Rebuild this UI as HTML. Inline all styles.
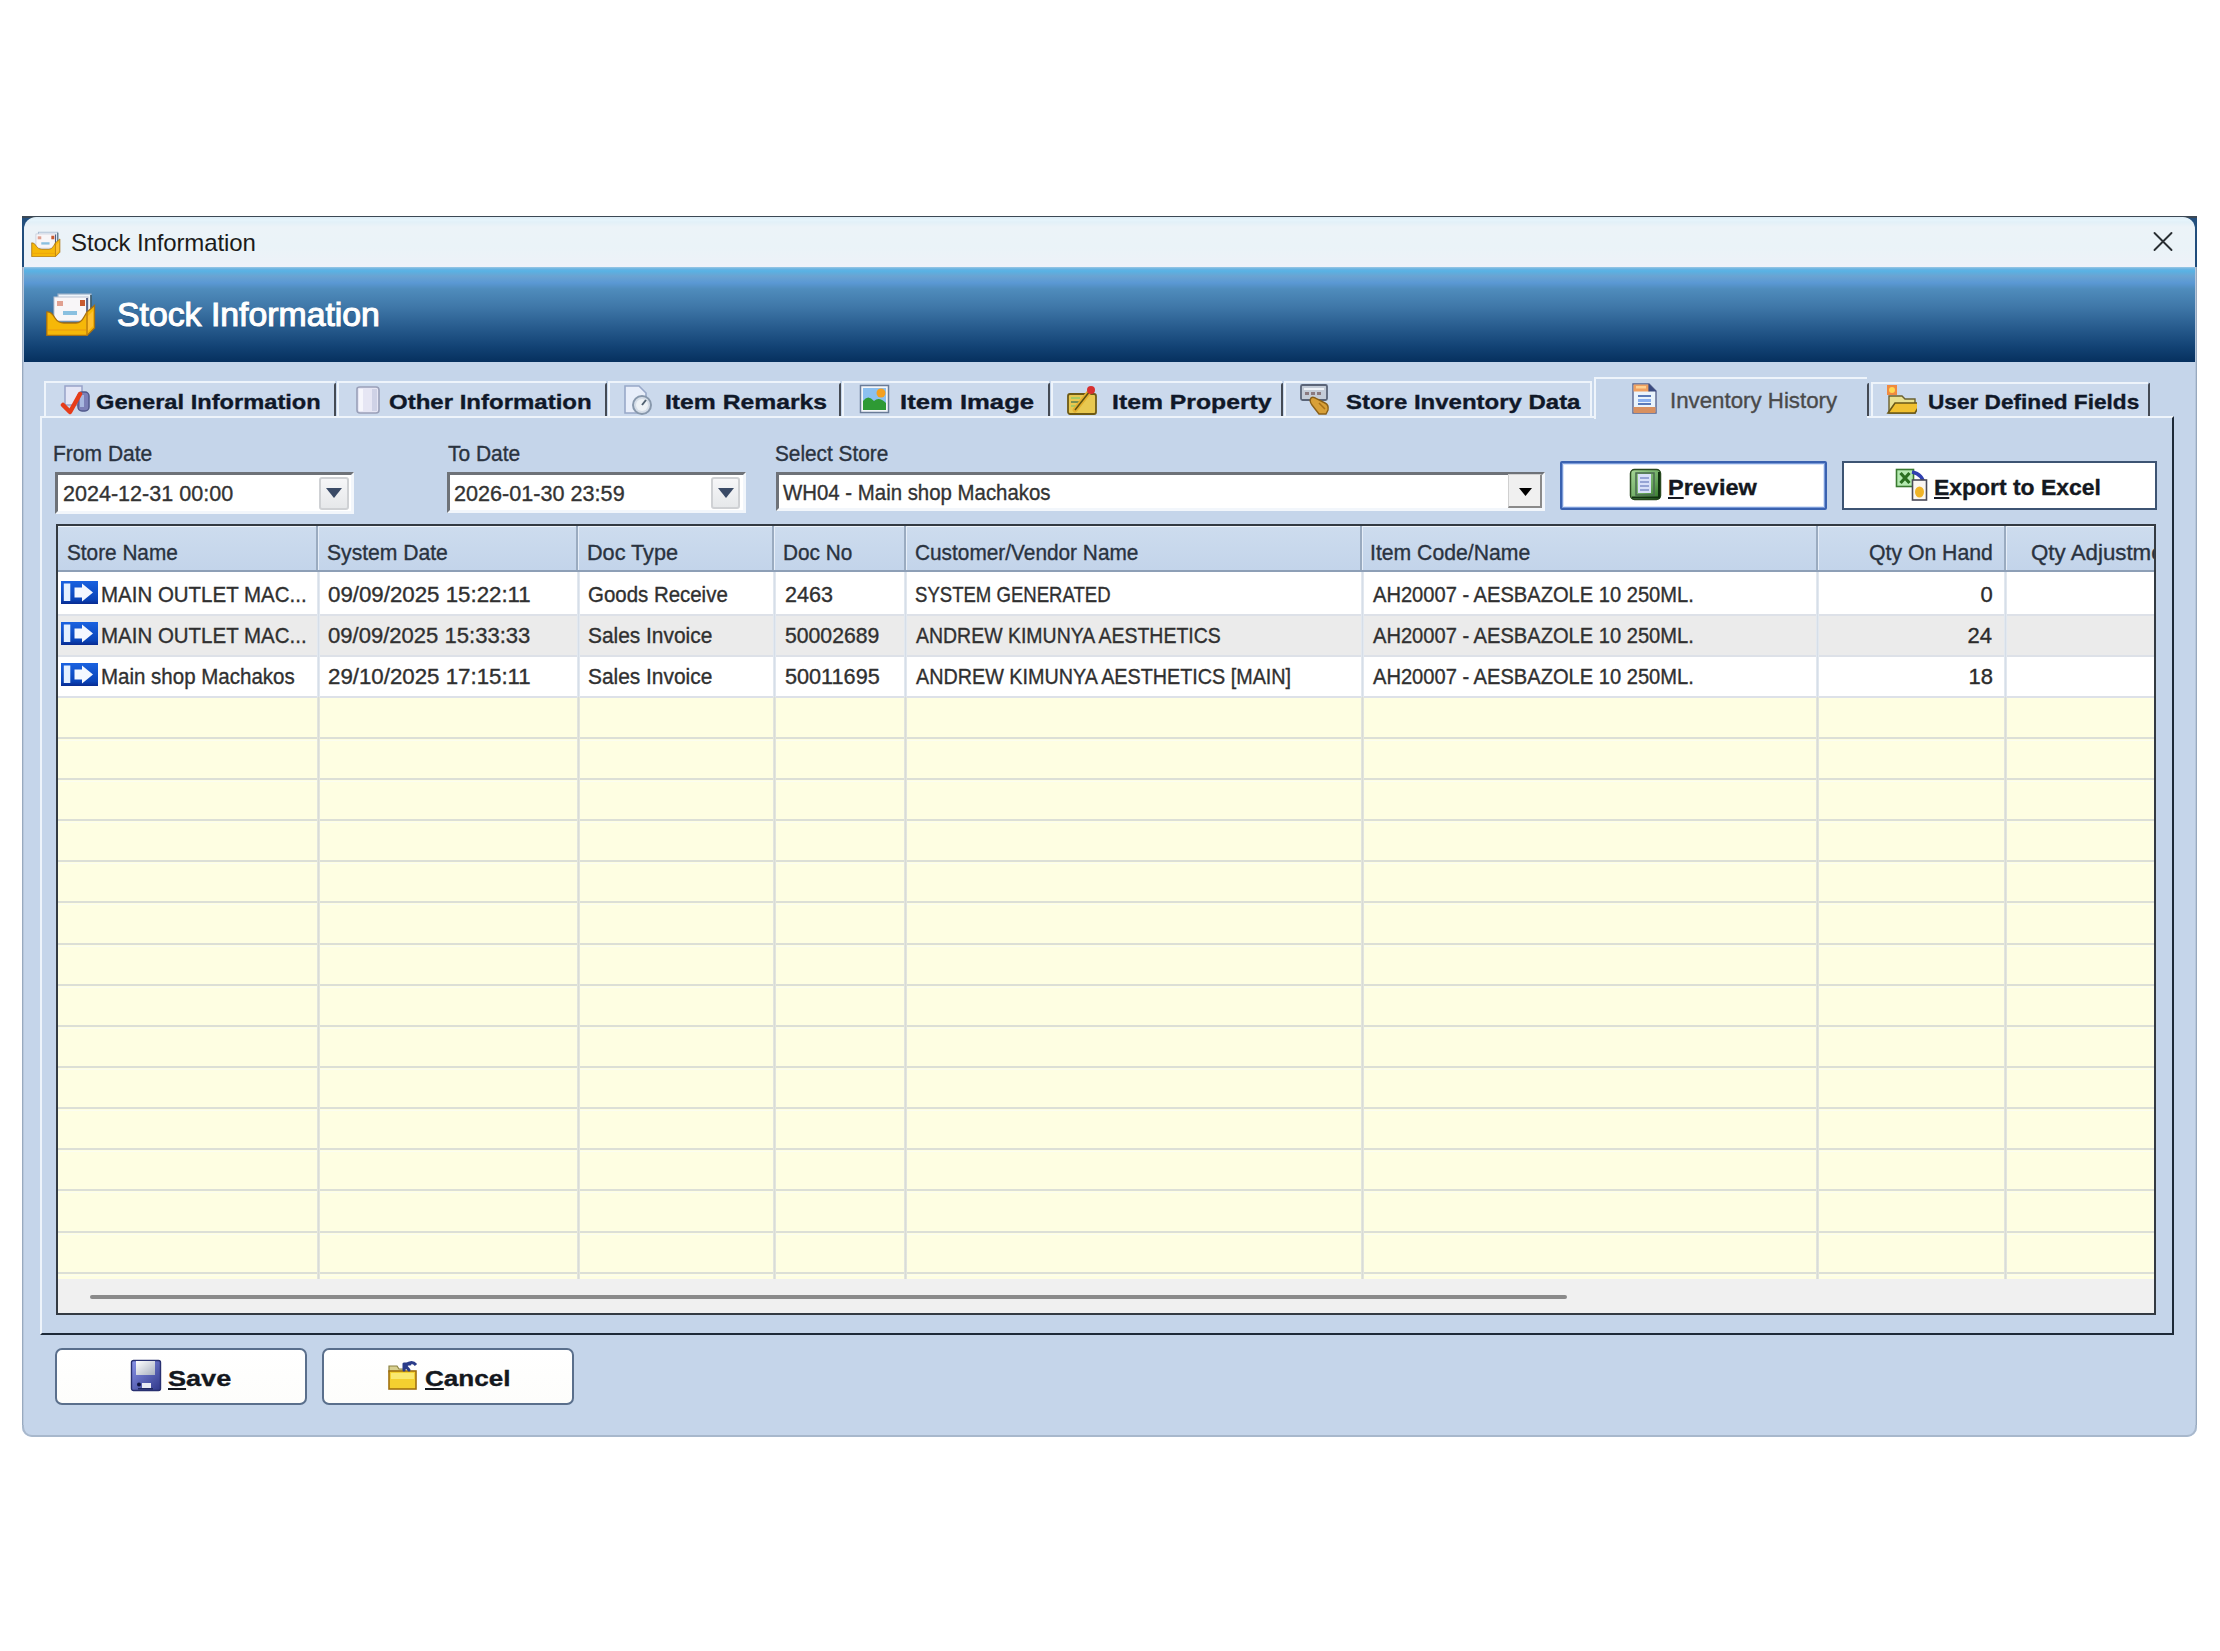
<!DOCTYPE html><html><head><meta charset="utf-8"><style>
*{margin:0;padding:0;box-sizing:border-box}
html,body{width:2220px;height:1651px;overflow:hidden;background:#fff;font-family:"Liberation Sans",sans-serif}
.a{position:absolute}
.t{position:absolute;white-space:nowrap;font-family:"Liberation Sans",sans-serif;-webkit-text-stroke:0.35px currentColor}
</style></head><body><div class="a" style="left:22px;top:216px;width:2175px;height:1221px;background:#c5d5ea;border-radius:0 0 10px 10px;"></div>
<div class="a" style="left:22px;top:216px;width:2175px;height:51px;background:linear-gradient(#3c4854 0px,#3c4854 1.5px,#24507e 2px,#1d4a7a);"></div>
<div class="a" style="left:24px;top:217px;width:2171px;height:50px;background:linear-gradient(#dcecf6 0px,#e6f4fb 3px,#e2f0f8 5px,#ecf3f8 10px,#eaf3f8 30px,#edf2f8 45px,#f0f2fa 50px);border-radius:12px 12px 0 0;"></div>
<div class="a" style="left:23px;top:267px;width:2173px;height:95px;background:linear-gradient(#9cc8e4 0px,#6ab2e2 2px,#58b2e4 4px,#6aa4d2 9px,#5a98d4 16px,#4f8cbc 22px,#3f77a8 40px,#285c8e 60px,#124274 80px,#06305e 95px);"></div>
<div class="a" style="left:22px;top:267px;width:2px;height:1160px;background:linear-gradient(90deg,#8a9bb0,#c5d5ea);"></div>
<div class="a" style="left:2195px;top:267px;width:2px;height:1160px;background:linear-gradient(90deg,#c5d5ea,#8a9bb0);"></div>
<div class="a" style="left:22px;top:1425px;width:2175px;height:12px;border:2px solid #a8b8cc;border-top:none;border-radius:0 0 10px 10px;"></div>
<div class="t" style="left:71.00px;top:230.90px;font-size:24px;line-height:24px;letter-spacing:-0.125px;color:#1b1b1b;-webkit-text-stroke:0;">Stock Information</div>
<svg class="a" style="left:2150px;top:229px" width="26" height="24" viewBox="0 0 26 24"><path d="M4.5 4 L21.5 21 M21.5 4 L4.5 21" stroke="#2a2f33" stroke-width="1.9" stroke-linecap="round"/></svg>
<div class="t" style="left:116.95px;top:298.25px;font-size:33px;line-height:33px;color:#ffffff;transform:scaleX(1.0238);transform-origin:0 0;-webkit-text-stroke:1.1px #fff;text-shadow:0 1px 1px rgba(0,20,60,.4);">Stock Information</div>
<svg class="a" style="left:31px;top:231px" width="30" height="26" viewBox="0 0 50 44"><rect x="12" y="2" width="33" height="22" fill="#eef4fa" stroke="#9ab0c8" stroke-width="1.2"/><rect x="8" y="5" width="34" height="24" fill="#f8f6f8" stroke="#b8c0d0" stroke-width="1"/><rect x="11" y="9" width="6" height="5" fill="#e0a090"/><rect x="34" y="8" width="5" height="6" fill="#c85a30"/><rect x="17" y="19" width="14" height="4" fill="#8ac0e0"/><path d="M41 6 L41 26" stroke="#304070" stroke-width="1.5"/><path d="M45 3 L45 22" stroke="#305060" stroke-width="1.5"/><path d="M0.8 20 Q5 19 9 26 Q12 31 18 31 L30 31 Q35 31 38 25 L41 20 L48.5 13.5 L48.5 36 L41 43.5 L0.8 43.5 Z" fill="#f6b808" stroke="#a87010" stroke-width="1.3"/><path d="M41 20 L41 43.5" stroke="#c08010" stroke-width="1.5"/><path d="M2 38 L40 38" stroke="#e89a10" stroke-width="1"/><path d="M42 24 L47 19 L47 34 L42 39 Z" fill="#ffc030"/></svg>
<svg class="a" style="left:46px;top:292px" width="50" height="44" viewBox="0 0 50 44"><rect x="12" y="2" width="33" height="22" fill="#eef4fa" stroke="#9ab0c8" stroke-width="1.2"/><rect x="8" y="5" width="34" height="24" fill="#f8f6f8" stroke="#b8c0d0" stroke-width="1"/><rect x="11" y="9" width="6" height="5" fill="#e0a090"/><rect x="34" y="8" width="5" height="6" fill="#c85a30"/><rect x="17" y="19" width="14" height="4" fill="#8ac0e0"/><path d="M41 6 L41 26" stroke="#304070" stroke-width="1.5"/><path d="M45 3 L45 22" stroke="#305060" stroke-width="1.5"/><path d="M0.8 20 Q5 19 9 26 Q12 31 18 31 L30 31 Q35 31 38 25 L41 20 L48.5 13.5 L48.5 36 L41 43.5 L0.8 43.5 Z" fill="#f6b808" stroke="#a87010" stroke-width="1.3"/><path d="M41 20 L41 43.5" stroke="#c08010" stroke-width="1.5"/><path d="M2 38 L40 38" stroke="#e89a10" stroke-width="1"/><path d="M42 24 L47 19 L47 34 L42 39 Z" fill="#ffc030"/></svg>
<div class="a" style="left:44px;top:381px;width:291px;height:36px;background:#cbd9ec;border-top:2px solid #eef4fb;border-left:2px solid #eef4fb;"></div>
<div class="t" style="left:95.87px;top:391.35px;font-size:21px;line-height:21px;color:#101828;transform:scaleX(1.1263);transform-origin:0 0;font-weight:bold;">General Information</div>
<div class="a" style="left:337px;top:381px;width:269px;height:36px;background:#cbd9ec;border-top:2px solid #eef4fb;border-left:2px solid #eef4fb;"></div>
<div class="t" style="left:388.86px;top:391.35px;font-size:21px;line-height:21px;color:#101828;transform:scaleX(1.1429);transform-origin:0 0;font-weight:bold;">Other Information</div>
<div class="a" style="left:608px;top:381px;width:232px;height:36px;background:#cbd9ec;border-top:2px solid #eef4fb;border-left:2px solid #eef4fb;"></div>
<div class="t" style="left:664.82px;top:391.35px;font-size:21px;line-height:21px;color:#101828;transform:scaleX(1.1765);transform-origin:0 0;font-weight:bold;">Item Remarks</div>
<div class="a" style="left:842px;top:381px;width:207px;height:36px;background:#cbd9ec;border-top:2px solid #eef4fb;border-left:2px solid #eef4fb;"></div>
<div class="t" style="left:899.78px;top:391.35px;font-size:21px;line-height:21px;color:#101828;transform:scaleX(1.2222);transform-origin:0 0;font-weight:bold;">Item Image</div>
<div class="a" style="left:1051px;top:381px;width:231px;height:36px;background:#cbd9ec;border-top:2px solid #eef4fb;border-left:2px solid #eef4fb;"></div>
<div class="t" style="left:1111.82px;top:391.35px;font-size:21px;line-height:21px;color:#101828;transform:scaleX(1.1791);transform-origin:0 0;font-weight:bold;">Item Property</div>
<div class="a" style="left:1284px;top:381px;width:308px;height:36px;background:#cbd9ec;border-top:2px solid #eef4fb;border-left:2px solid #eef4fb;"></div>
<div class="t" style="left:1345.86px;top:391.35px;font-size:21px;line-height:21px;color:#101828;transform:scaleX(1.1415);transform-origin:0 0;font-weight:bold;">Store Inventory Data</div>
<div class="a" style="left:1590px;top:382px;width:2px;height:35px;background:#eef4fb;"></div>
<div class="a" style="left:334px;top:383px;width:2px;height:33px;background:#444a54;border-radius:2px 0 0 0;"></div>
<div class="a" style="left:605px;top:383px;width:2px;height:33px;background:#444a54;border-radius:2px 0 0 0;"></div>
<div class="a" style="left:839px;top:383px;width:2px;height:33px;background:#444a54;border-radius:2px 0 0 0;"></div>
<div class="a" style="left:1048px;top:383px;width:2px;height:33px;background:#444a54;border-radius:2px 0 0 0;"></div>
<div class="a" style="left:1281px;top:383px;width:2px;height:33px;background:#444a54;border-radius:2px 0 0 0;"></div>
<div class="a" style="left:1867px;top:383px;width:2px;height:33px;background:#444a54;border-radius:2px 0 0 0;"></div>
<div class="a" style="left:2148px;top:383px;width:2px;height:33px;background:#444a54;border-radius:2px 0 0 0;"></div>
<div class="a" style="left:1871px;top:382px;width:277px;height:35px;background:#cbd9ec;border-top:2px solid #eef4fb;border-left:2px solid #eef4fb;"></div>
<div class="t" style="left:1927.92px;top:391.35px;font-size:21px;line-height:21px;color:#101828;transform:scaleX(1.0773);transform-origin:0 0;font-weight:bold;">User Defined Fields</div>
<div class="a" style="left:40px;top:416px;width:2134px;height:919px;background:#c5d5ea;border-top:2px solid #eef4fb;border-left:2px solid #eef4fb;border-right:2px solid #1e2a38;border-bottom:2px solid #1e2a38;"></div>
<div class="a" style="left:1594px;top:377px;width:273px;height:42px;background:#c5d5ea;border-top:2px solid #eef4fb;border-left:2px solid #eef4fb;"></div>
<div class="t" style="left:1669.98px;top:390.10px;font-size:22px;line-height:22px;color:#4a4a4a;transform:scaleX(1.0123);transform-origin:0 0;">Inventory History</div>
<div class="t" style="left:52.59px;top:443.10px;font-size:22px;line-height:22px;color:#2a3340;transform:scaleX(0.9554);transform-origin:0 0;">From Date</div>
<div class="t" style="left:447.50px;top:443.10px;font-size:22px;line-height:22px;color:#2a3340;transform:scaleX(0.9533);transform-origin:0 0;">To Date</div>
<div class="t" style="left:774.56px;top:443.10px;font-size:22px;line-height:22px;color:#2a3340;transform:scaleX(0.9449);transform-origin:0 0;">Select Store</div>
<div class="a" style="left:55px;top:472px;width:299px;height:42px;background:#fff;border-top:3px solid #6e7278;border-left:3px solid #6e7278;border-bottom:3px solid #f2f6fb;border-right:3px solid #f2f6fb;"></div><div class="a" style="left:319px;top:477px;width:30px;height:33px;background:linear-gradient(#f6f6f8,#e6e8ea);border:2px solid #cfd1d4;border-radius:3px;"></div><svg class="a" style="left:326.0px;top:488.0px" width="16" height="10" viewBox="0 0 16 10"><path d="M0 0 L16 0 L8.0 10 Z" fill="#3a4a66"/></svg>
<div class="a" style="left:447px;top:472px;width:299px;height:41px;background:#fff;border-top:3px solid #6e7278;border-left:3px solid #6e7278;border-bottom:3px solid #f2f6fb;border-right:3px solid #f2f6fb;"></div><div class="a" style="left:711px;top:477px;width:29px;height:32px;background:linear-gradient(#f6f6f8,#e6e8ea);border:2px solid #cfd1d4;border-radius:3px;"></div><svg class="a" style="left:717.5px;top:487.5px" width="16" height="10" viewBox="0 0 16 10"><path d="M0 0 L16 0 L8.0 10 Z" fill="#3a4a66"/></svg>
<div class="a" style="left:776px;top:472px;width:769px;height:39px;background:#fff;border-top:3px solid #6e7278;border-left:3px solid #6e7278;border-bottom:3px solid #f2f6fb;border-right:3px solid #f2f6fb;"></div><div class="a" style="left:1508px;top:474px;width:34px;height:34px;background:#f0f0f0;border:1px solid #d0d0d0;border-bottom:2px solid #8a8a8a;border-right:2px solid #8a8a8a;"></div><svg class="a" style="left:1518.5px;top:487.5px" width="13" height="8" viewBox="0 0 13 8"><path d="M0 0 L13 0 L6.5 8 Z" fill="#000"/></svg>
<div class="t" style="left:63.02px;top:482.60px;font-size:22px;line-height:22px;color:#333;transform:scaleX(0.9795);transform-origin:0 0;">2024-12-31 00:00</div>
<div class="t" style="left:454.02px;top:482.60px;font-size:22px;line-height:22px;color:#333;transform:scaleX(0.9825);transform-origin:0 0;">2026-01-30 23:59</div>
<div class="t" style="left:783.00px;top:482.10px;font-size:22px;line-height:22px;color:#333;transform:scaleX(0.9271);transform-origin:0 0;">WH04 - Main shop Machakos</div>
<div class="a" style="left:1560px;top:461px;width:267px;height:49px;background:#fff;border:2px solid #3a62b0;border-radius:2px;box-shadow:inset 0 0 0 1px #7a9ad8,inset 0 0 0 2px #d8e4f8;"></div>
<div class="t" style="left:1667.93px;top:477.10px;font-size:22px;line-height:22px;transform:scaleX(1.0671);transform-origin:0 0;color:#141820;font-weight:bold"><span style="text-decoration:underline;text-underline-offset:2px;text-decoration-thickness:2px">P</span>review</div>
<div class="a" style="left:1842px;top:461px;width:315px;height:49px;background:#fff;border:2px solid #3d5473;"></div>
<div class="t" style="left:1934.46px;top:476.60px;font-size:22px;line-height:22px;transform:scaleX(1.0411);transform-origin:0 0;color:#141820;font-weight:bold"><span style="text-decoration:underline;text-underline-offset:2px;text-decoration-thickness:2px">E</span>xport to Excel</div>
<div class="a" style="left:56px;top:524px;width:2100px;height:791px;background:#fefee2;border:2px solid #333a42;"></div>
<div class="a" style="left:58px;top:526px;width:2096px;height:47px;background:linear-gradient(#cddcee,#c3d4ea);border-top:1px solid #eef4fb;border-bottom:3px solid #8d9fb6;"></div>
<div class="a" style="left:316px;top:526px;width:2px;height:44px;background:#9aabc0;box-shadow:1px 0 0 #e6eef8;"></div>
<div class="a" style="left:576px;top:526px;width:2px;height:44px;background:#9aabc0;box-shadow:1px 0 0 #e6eef8;"></div>
<div class="a" style="left:772px;top:526px;width:2px;height:44px;background:#9aabc0;box-shadow:1px 0 0 #e6eef8;"></div>
<div class="a" style="left:904px;top:526px;width:2px;height:44px;background:#9aabc0;box-shadow:1px 0 0 #e6eef8;"></div>
<div class="a" style="left:1360px;top:526px;width:2px;height:44px;background:#9aabc0;box-shadow:1px 0 0 #e6eef8;"></div>
<div class="a" style="left:1816px;top:526px;width:2px;height:44px;background:#9aabc0;box-shadow:1px 0 0 #e6eef8;"></div>
<div class="a" style="left:2004px;top:526px;width:2px;height:44px;background:#9aabc0;box-shadow:1px 0 0 #e6eef8;"></div>
<div class="a" style="left:58px;top:572px;width:2096px;height:42px;background:#ffffff;"></div>
<div class="a" style="left:58px;top:614px;width:2096px;height:42px;background:#ebebeb;"></div>
<div class="a" style="left:58px;top:655px;width:2096px;height:42px;background:#ffffff;"></div>
<div class="a" style="left:58px;top:614px;width:2096px;height:2px;background:#dde1e8;"></div>
<div class="a" style="left:58px;top:655px;width:2096px;height:2px;background:#dde1e8;"></div>
<div class="a" style="left:58px;top:696px;width:2096px;height:2px;background:#dde1e8;"></div>
<div class="a" style="left:58px;top:737px;width:2096px;height:2px;background:#dcdfd6;"></div>
<div class="a" style="left:58px;top:740px;width:2096px;height:1px;background:#fbfdf0;"></div>
<div class="a" style="left:58px;top:778px;width:2096px;height:2px;background:#dcdfd6;"></div>
<div class="a" style="left:58px;top:781px;width:2096px;height:1px;background:#fbfdf0;"></div>
<div class="a" style="left:58px;top:819px;width:2096px;height:2px;background:#dcdfd6;"></div>
<div class="a" style="left:58px;top:822px;width:2096px;height:1px;background:#fbfdf0;"></div>
<div class="a" style="left:58px;top:860px;width:2096px;height:2px;background:#dcdfd6;"></div>
<div class="a" style="left:58px;top:863px;width:2096px;height:1px;background:#fbfdf0;"></div>
<div class="a" style="left:58px;top:901px;width:2096px;height:2px;background:#dcdfd6;"></div>
<div class="a" style="left:58px;top:904px;width:2096px;height:1px;background:#fbfdf0;"></div>
<div class="a" style="left:58px;top:943px;width:2096px;height:2px;background:#dcdfd6;"></div>
<div class="a" style="left:58px;top:946px;width:2096px;height:1px;background:#fbfdf0;"></div>
<div class="a" style="left:58px;top:984px;width:2096px;height:2px;background:#dcdfd6;"></div>
<div class="a" style="left:58px;top:987px;width:2096px;height:1px;background:#fbfdf0;"></div>
<div class="a" style="left:58px;top:1025px;width:2096px;height:2px;background:#dcdfd6;"></div>
<div class="a" style="left:58px;top:1028px;width:2096px;height:1px;background:#fbfdf0;"></div>
<div class="a" style="left:58px;top:1066px;width:2096px;height:2px;background:#dcdfd6;"></div>
<div class="a" style="left:58px;top:1069px;width:2096px;height:1px;background:#fbfdf0;"></div>
<div class="a" style="left:58px;top:1107px;width:2096px;height:2px;background:#dcdfd6;"></div>
<div class="a" style="left:58px;top:1110px;width:2096px;height:1px;background:#fbfdf0;"></div>
<div class="a" style="left:58px;top:1148px;width:2096px;height:2px;background:#dcdfd6;"></div>
<div class="a" style="left:58px;top:1151px;width:2096px;height:1px;background:#fbfdf0;"></div>
<div class="a" style="left:58px;top:1189px;width:2096px;height:2px;background:#dcdfd6;"></div>
<div class="a" style="left:58px;top:1192px;width:2096px;height:1px;background:#fbfdf0;"></div>
<div class="a" style="left:58px;top:1231px;width:2096px;height:2px;background:#dcdfd6;"></div>
<div class="a" style="left:58px;top:1234px;width:2096px;height:1px;background:#fbfdf0;"></div>
<div class="a" style="left:58px;top:1272px;width:2096px;height:2px;background:#dcdfd6;"></div>
<div class="a" style="left:58px;top:1275px;width:2096px;height:1px;background:#fbfdf0;"></div>
<div class="a" style="left:317px;top:572px;width:3px;height:125px;background:linear-gradient(90deg,#e8edf3,#d6dee8,#e8edf3);"></div>
<div class="a" style="left:317px;top:697px;width:3px;height:582px;background:linear-gradient(90deg,#e6e9e2,#d9dcd6,#e6e9e2);"></div>
<div class="a" style="left:577px;top:572px;width:3px;height:125px;background:linear-gradient(90deg,#e8edf3,#d6dee8,#e8edf3);"></div>
<div class="a" style="left:577px;top:697px;width:3px;height:582px;background:linear-gradient(90deg,#e6e9e2,#d9dcd6,#e6e9e2);"></div>
<div class="a" style="left:773px;top:572px;width:3px;height:125px;background:linear-gradient(90deg,#e8edf3,#d6dee8,#e8edf3);"></div>
<div class="a" style="left:773px;top:697px;width:3px;height:582px;background:linear-gradient(90deg,#e6e9e2,#d9dcd6,#e6e9e2);"></div>
<div class="a" style="left:904px;top:572px;width:3px;height:125px;background:linear-gradient(90deg,#e8edf3,#d6dee8,#e8edf3);"></div>
<div class="a" style="left:904px;top:697px;width:3px;height:582px;background:linear-gradient(90deg,#e6e9e2,#d9dcd6,#e6e9e2);"></div>
<div class="a" style="left:1361px;top:572px;width:3px;height:125px;background:linear-gradient(90deg,#e8edf3,#d6dee8,#e8edf3);"></div>
<div class="a" style="left:1361px;top:697px;width:3px;height:582px;background:linear-gradient(90deg,#e6e9e2,#d9dcd6,#e6e9e2);"></div>
<div class="a" style="left:1816px;top:572px;width:3px;height:125px;background:linear-gradient(90deg,#e8edf3,#d6dee8,#e8edf3);"></div>
<div class="a" style="left:1816px;top:697px;width:3px;height:582px;background:linear-gradient(90deg,#e6e9e2,#d9dcd6,#e6e9e2);"></div>
<div class="a" style="left:2004px;top:572px;width:3px;height:125px;background:linear-gradient(90deg,#e8edf3,#d6dee8,#e8edf3);"></div>
<div class="a" style="left:2004px;top:697px;width:3px;height:582px;background:linear-gradient(90deg,#e6e9e2,#d9dcd6,#e6e9e2);"></div>
<div class="a" style="left:58px;top:1279px;width:2096px;height:34px;background:#f0f0f0;"></div>
<div class="a" style="left:90px;top:1295px;width:1477px;height:4px;background:#8a8a8a;border-radius:2px;"></div>
<div class="t" style="left:67.06px;top:541.60px;font-size:22px;line-height:22px;color:#2a3340;transform:scaleX(0.9435);transform-origin:0 0;">Store Name</div>
<div class="t" style="left:327.04px;top:541.60px;font-size:22px;line-height:22px;color:#2a3340;transform:scaleX(0.9597);transform-origin:0 0;">System Date</div>
<div class="t" style="left:586.53px;top:541.60px;font-size:22px;line-height:22px;color:#2a3340;transform:scaleX(0.9831);transform-origin:0 0;">Doc Type</div>
<div class="t" style="left:782.61px;top:541.60px;font-size:22px;line-height:22px;color:#2a3340;transform:scaleX(0.9429);transform-origin:0 0;">Doc No</div>
<div class="t" style="left:915.05px;top:541.60px;font-size:22px;line-height:22px;color:#2a3340;transform:scaleX(0.9466);transform-origin:0 0;">Customer/Vendor Name</div>
<div class="t" style="left:1370.07px;top:541.60px;font-size:22px;line-height:22px;color:#2a3340;transform:scaleX(0.9632);transform-origin:0 0;">Item Code/Name</div>
<div class="t" style="left:1869.04px;top:541.60px;font-size:22px;line-height:22px;color:#2a3340;transform:scaleX(0.9643);transform-origin:0 0;">Qty On Hand</div>
<div class="a" style="left:2030px;top:526px;width:124px;height:44px;overflow:hidden"><div class="t" style="left:1.49px;top:15.60px;font-size:22px;line-height:22px;color:#2a3340;transform:scaleX(1.0135);transform-origin:0 0;">Qty Adjustment</div></div>
<svg class="a" style="left:61px;top:581px" width="37" height="23" viewBox="0 0 37 23"><defs><linearGradient id="rg" x1="0" y1="0" x2="0" y2="1"><stop offset="0" stop-color="#1a62e0"/><stop offset="0.8" stop-color="#0a44b8"/><stop offset="1" stop-color="#082a90"/></linearGradient></defs><rect x="0" y="0" width="37" height="23" fill="url(#rg)"/><rect x="2.8" y="2.5" width="6.5" height="17.5" fill="#e4f0ff"/><path d="M13.5 6.5 L21 6.5 L21 2.5 L32 11.5 L21 20.5 L21 16.5 L13.5 16.5 Z" fill="#f4f8ff"/></svg>
<div class="t" style="left:101.14px;top:584.10px;font-size:22px;line-height:22px;color:#303030;transform:scaleX(0.9309);transform-origin:0 0;">MAIN OUTLET MAC...</div>
<div class="t" style="left:327.99px;top:584.10px;font-size:22px;line-height:22px;color:#303030;transform:scaleX(1.0126);transform-origin:0 0;">09/09/2025 15:22:11</div>
<div class="t" style="left:588.07px;top:584.10px;font-size:22px;line-height:22px;color:#303030;transform:scaleX(0.9291);transform-origin:0 0;">Goods Receive</div>
<div class="t" style="left:785.02px;top:584.10px;font-size:22px;line-height:22px;color:#303030;transform:scaleX(0.9787);transform-origin:0 0;">2463</div>
<div class="t" style="left:915.16px;top:584.10px;font-size:22px;line-height:22px;color:#303030;transform:scaleX(0.8435);transform-origin:0 0;">SYSTEM GENERATED</div>
<div class="t" style="left:1373.00px;top:584.10px;font-size:22px;line-height:22px;color:#303030;transform:scaleX(0.9140);transform-origin:0 0;">AH20007 - AESBAZOLE 10 250ML.</div>
<div class="t" style="left:1980.50px;top:584.10px;font-size:22px;line-height:22px;letter-spacing:0.000px;color:#2b2b2b;">0</div>
<svg class="a" style="left:61px;top:622px" width="37" height="23" viewBox="0 0 37 23"><defs><linearGradient id="rg" x1="0" y1="0" x2="0" y2="1"><stop offset="0" stop-color="#1a62e0"/><stop offset="0.8" stop-color="#0a44b8"/><stop offset="1" stop-color="#082a90"/></linearGradient></defs><rect x="0" y="0" width="37" height="23" fill="url(#rg)"/><rect x="2.8" y="2.5" width="6.5" height="17.5" fill="#e4f0ff"/><path d="M13.5 6.5 L21 6.5 L21 2.5 L32 11.5 L21 20.5 L21 16.5 L13.5 16.5 Z" fill="#f4f8ff"/></svg>
<div class="t" style="left:101.14px;top:625.24px;font-size:22px;line-height:22px;color:#303030;transform:scaleX(0.9309);transform-origin:0 0;">MAIN OUTLET MAC...</div>
<div class="t" style="left:328.00px;top:625.24px;font-size:22px;line-height:22px;color:#303030;transform:scaleX(1.0025);transform-origin:0 0;">09/09/2025 15:33:33</div>
<div class="t" style="left:588.05px;top:625.24px;font-size:22px;line-height:22px;color:#303030;transform:scaleX(0.9496);transform-origin:0 0;">Sales Invoice</div>
<div class="t" style="left:785.04px;top:625.24px;font-size:22px;line-height:22px;color:#303030;transform:scaleX(0.9635);transform-origin:0 0;">50002689</div>
<div class="t" style="left:916.00px;top:625.24px;font-size:22px;line-height:22px;color:#303030;transform:scaleX(0.8852);transform-origin:0 0;">ANDREW KIMUNYA AESTHETICS</div>
<div class="t" style="left:1373.00px;top:625.24px;font-size:22px;line-height:22px;color:#303030;transform:scaleX(0.9140);transform-origin:0 0;">AH20007 - AESBAZOLE 10 250ML.</div>
<div class="t" style="left:1967.50px;top:625.24px;font-size:22px;line-height:22px;letter-spacing:0.000px;color:#2b2b2b;">24</div>
<svg class="a" style="left:61px;top:663px" width="37" height="23" viewBox="0 0 37 23"><defs><linearGradient id="rg" x1="0" y1="0" x2="0" y2="1"><stop offset="0" stop-color="#1a62e0"/><stop offset="0.8" stop-color="#0a44b8"/><stop offset="1" stop-color="#082a90"/></linearGradient></defs><rect x="0" y="0" width="37" height="23" fill="url(#rg)"/><rect x="2.8" y="2.5" width="6.5" height="17.5" fill="#e4f0ff"/><path d="M13.5 6.5 L21 6.5 L21 2.5 L32 11.5 L21 20.5 L21 16.5 L13.5 16.5 Z" fill="#f4f8ff"/></svg>
<div class="t" style="left:101.14px;top:666.38px;font-size:22px;line-height:22px;color:#303030;transform:scaleX(0.9317);transform-origin:0 0;">Main shop Machakos</div>
<div class="t" style="left:327.99px;top:666.38px;font-size:22px;line-height:22px;color:#303030;transform:scaleX(1.0126);transform-origin:0 0;">29/10/2025 17:15:11</div>
<div class="t" style="left:588.05px;top:666.38px;font-size:22px;line-height:22px;color:#303030;transform:scaleX(0.9496);transform-origin:0 0;">Sales Invoice</div>
<div class="t" style="left:785.02px;top:666.38px;font-size:22px;line-height:22px;color:#303030;transform:scaleX(0.9840);transform-origin:0 0;">50011695</div>
<div class="t" style="left:916.00px;top:666.38px;font-size:22px;line-height:22px;color:#303030;transform:scaleX(0.8981);transform-origin:0 0;">ANDREW KIMUNYA AESTHETICS [MAIN]</div>
<div class="t" style="left:1373.00px;top:666.38px;font-size:22px;line-height:22px;color:#303030;transform:scaleX(0.9140);transform-origin:0 0;">AH20007 - AESBAZOLE 10 250ML.</div>
<div class="t" style="left:1968.50px;top:666.38px;font-size:22px;line-height:22px;letter-spacing:0.000px;color:#2b2b2b;">18</div>
<div class="a" style="left:55px;top:1348px;width:252px;height:57px;background:linear-gradient(#ffffff,#fdfdfb);border:2px solid #5a6f8c;border-radius:7px;"></div>
<div class="t" style="left:167.77px;top:1367.60px;font-size:22px;line-height:22px;transform:scaleX(1.2300);transform-origin:0 0;color:#14181e;font-weight:bold"><span style="text-decoration:underline;text-underline-offset:2px;text-decoration-thickness:2px">S</span>ave</div>
<div class="a" style="left:322px;top:1348px;width:252px;height:57px;background:linear-gradient(#ffffff,#fdfdfb);border:2px solid #5a6f8c;border-radius:7px;"></div>
<div class="t" style="left:424.81px;top:1367.60px;font-size:22px;line-height:22px;transform:scaleX(1.1857);transform-origin:0 0;color:#14181e;font-weight:bold"><span style="text-decoration:underline;text-underline-offset:2px;text-decoration-thickness:2px">C</span>ancel</div>
<svg class="a" style="left:60px;top:384px" width="32" height="31" viewBox="0 0 32 31"><rect x="5" y="2" width="17" height="19" fill="#e4e6f6" stroke="#98a2c8" stroke-width="1.5"/><rect x="18" y="8" width="11" height="19" rx="4" fill="#7c80b8" stroke="#50588a" stroke-width="1.5"/><rect x="20" y="11" width="4" height="12" fill="#a8b8e0"/><path d="M3 21 L10 28 L20 10" fill="none" stroke="#e63c1a" stroke-width="4.5" stroke-linecap="round" stroke-linejoin="round"/></svg>
<svg class="a" style="left:354px;top:385px" width="27" height="30" viewBox="0 0 27 30"><path d="M3 4 Q3 2 6 2 L22 2 Q25 2 25 5 L25 25 Q25 28 22 28 L6 28 Q3 28 3 25 Z" fill="#e6e6f4" stroke="#9aa0b8" stroke-width="1.6"/><path d="M18 4 L23 4 L23 26 L18 26 Z" fill="#cfd2e6"/><path d="M5 4 L9 4 L9 26 L5 26 Z" fill="#f6f6fc"/></svg>
<svg class="a" style="left:622px;top:384px" width="33" height="32" viewBox="0 0 33 32"><path d="M3 2 L17 2 L24 9 L24 29 L3 29 Z" fill="#e8eefa" stroke="#98a8c8" stroke-width="1.6"/><circle cx="20" cy="21" r="9" fill="#d6dee8" stroke="#8898ac" stroke-width="2"/><circle cx="20" cy="21" r="6" fill="#eef2f6"/><path d="M20 21 L24 16" stroke="#506070" stroke-width="2"/></svg>
<svg class="a" style="left:859px;top:384px" width="31" height="30" viewBox="0 0 31 30"><rect x="1.5" y="1.5" width="28" height="27" fill="#f4f6fa" stroke="#6a7c98" stroke-width="1.5"/><rect x="4" y="4" width="23" height="22" fill="#8cc0f0"/><circle cx="22" cy="9" r="4.5" fill="#f4a020"/><path d="M4 26 L4 17 Q9 10 15 17 Q20 12 27 19 L27 26 Z" fill="#2e9a34"/></svg>
<svg class="a" style="left:1066px;top:384px" width="33" height="32" viewBox="0 0 33 32"><rect x="2" y="10" width="28" height="20" rx="2" fill="#e8c850" stroke="#6e5a14" stroke-width="1.8"/><rect x="5" y="13" width="9" height="2" fill="#a8c860"/><rect x="5" y="17" width="9" height="2" fill="#7a9050"/><rect x="5" y="21" width="9" height="2" fill="#a8c860"/><path d="M9 26 L24 7" stroke="#e4b030" stroke-width="5" stroke-linecap="round"/><path d="M9 26 L24 7" stroke="#5a5010" stroke-width="1.5"/><circle cx="25" cy="6" r="4" fill="#d83030"/></svg>
<svg class="a" style="left:1299px;top:383px" width="33" height="33" viewBox="0 0 33 33"><rect x="2" y="2" width="26" height="15" rx="1.5" fill="#c4ccd8" stroke="#5a6478" stroke-width="1.8"/><rect x="5" y="5" width="20" height="2" fill="#eef2f8"/><path d="M6 9 h4 v3 h-4z M12 9 h4 v3 h-4z M18 9 h4 v3 h-4z" fill="#8a7a80"/><path d="M12 15 Q14 13 18 16 L26 20 Q30 22 29 27 L27 31 L20 31 L13 22 Q10 18 12 15 Z" fill="#d8a038" stroke="#8a6018" stroke-width="1.4"/><path d="M20 20 L26 26" stroke="#a87018" stroke-width="1.5"/></svg>
<svg class="a" style="left:1631px;top:382px" width="27" height="33" viewBox="0 0 27 33"><path d="M2 2 L18 2 L25 9 L25 31 L2 31 Z" fill="#eaf4fc" stroke="#5a6690" stroke-width="1.4"/><rect x="2.5" y="2.5" width="16" height="7" fill="#f0a060"/><rect x="5" y="4" width="10" height="2.5" fill="#ffd090"/><rect x="7" y="13" width="13" height="2" fill="#5a7ab8"/><rect x="7" y="17" width="13" height="3" fill="#8ab0f0"/><rect x="7" y="21" width="13" height="2" fill="#5a7ab8"/><rect x="2.5" y="25" width="22" height="6" fill="#d89060"/><path d="M18 2 L18 9 L25 9" fill="#3a4a80" stroke="#3a4a80" stroke-width="1.2"/></svg>
<svg class="a" style="left:1883px;top:383px" width="34" height="32" viewBox="0 0 34 32"><rect x="4" y="2" width="10" height="10" fill="#f08a40"/><circle cx="9" cy="7" r="3" fill="#ffd850"/><path d="M6 13 L6 30 L32 30 L32 16 L22 16 L19 13 Z" fill="#e8e090" stroke="#6a6030" stroke-width="1.4"/><path d="M5 30 L12 20 L38 20 L32 30 Z" fill="#f0c030" stroke="#6a5818" stroke-width="1.6"/></svg>
<svg class="a" style="left:1629px;top:468px" width="33" height="33" viewBox="0 0 33 33"><defs><linearGradient id="pg" x1="0" y1="0" x2="1" y2="1"><stop offset="0" stop-color="#a8d898"/><stop offset="0.6" stop-color="#6aa860"/><stop offset="1" stop-color="#2a7020"/></linearGradient></defs><rect x="1.5" y="1.5" width="30" height="30" rx="4" fill="url(#pg)" stroke="#2a4a20" stroke-width="1.5"/><path d="M3 29.5 L30 29.5 L30 4" fill="none" stroke="#103010" stroke-width="2"/><rect x="7" y="5" width="18" height="22" fill="none" stroke="#4a6a50" stroke-width="1.5"/><rect x="9" y="6" width="13" height="19" fill="#d8e0f8"/><path d="M11 10 h9 M11 14 h9 M11 18 h9 M11 22 h9" stroke="#8090c8" stroke-width="1.6"/></svg>
<svg class="a" style="left:1895px;top:468px" width="34" height="34" viewBox="0 0 34 34"><rect x="1.5" y="1.5" width="17" height="17" fill="#b4eab0" stroke="#3a7a30" stroke-width="1.6"/><path d="M5.5 5 L14.5 15 M14.5 5 L5.5 15" stroke="#2a7020" stroke-width="3.2"/><path d="M17 4 Q28 6 29.5 18" fill="none" stroke="#3040b0" stroke-width="3.5"/><rect x="17.5" y="12" width="14" height="20" fill="#faf6f2" stroke="#4a4a58" stroke-width="1.6"/><ellipse cx="24.5" cy="24" rx="4.5" ry="5.5" fill="#f0b428"/></svg>
<svg class="a" style="left:130px;top:1359px" width="32" height="33" viewBox="0 0 32 33"><defs><linearGradient id="sg" x1="0" y1="0" x2="1" y2="1"><stop offset="0" stop-color="#8a94e8"/><stop offset="1" stop-color="#30388a"/></linearGradient><linearGradient id="sl" x1="0" y1="0" x2="1" y2="1"><stop offset="0" stop-color="#ffffff"/><stop offset="1" stop-color="#a8b0c0"/></linearGradient></defs><rect x="1.5" y="1.5" width="29" height="30" rx="2" fill="url(#sg)" stroke="#283070" stroke-width="1.4"/><rect x="6" y="2" width="19" height="14" fill="url(#sl)"/><circle cx="9" cy="25.5" r="2" fill="#101440"/><rect x="12" y="24" width="9" height="5" fill="#e8eaf4"/><rect x="8" y="29" width="15" height="1.5" fill="#202860"/></svg>
<svg class="a" style="left:387px;top:1360px" width="32" height="31" viewBox="0 0 32 31"><path d="M2 6 L10 6 L12 9 L18 9 L18 12 L2 12 Z" fill="#d8d090" stroke="#8a8040" stroke-width="1.2"/><rect x="2" y="11" width="27" height="18" fill="#f4d030" stroke="#a07010" stroke-width="1.6"/><rect x="4" y="13" width="23" height="6" fill="#fae870"/><path d="M22 10 L17 4 M17 4 L17 10 M17 4 L23 4" stroke="#2a3c8a" stroke-width="3" stroke-linecap="round"/><path d="M19 5 Q25 0 29 5" fill="none" stroke="#2a3c8a" stroke-width="3"/></svg></body></html>
